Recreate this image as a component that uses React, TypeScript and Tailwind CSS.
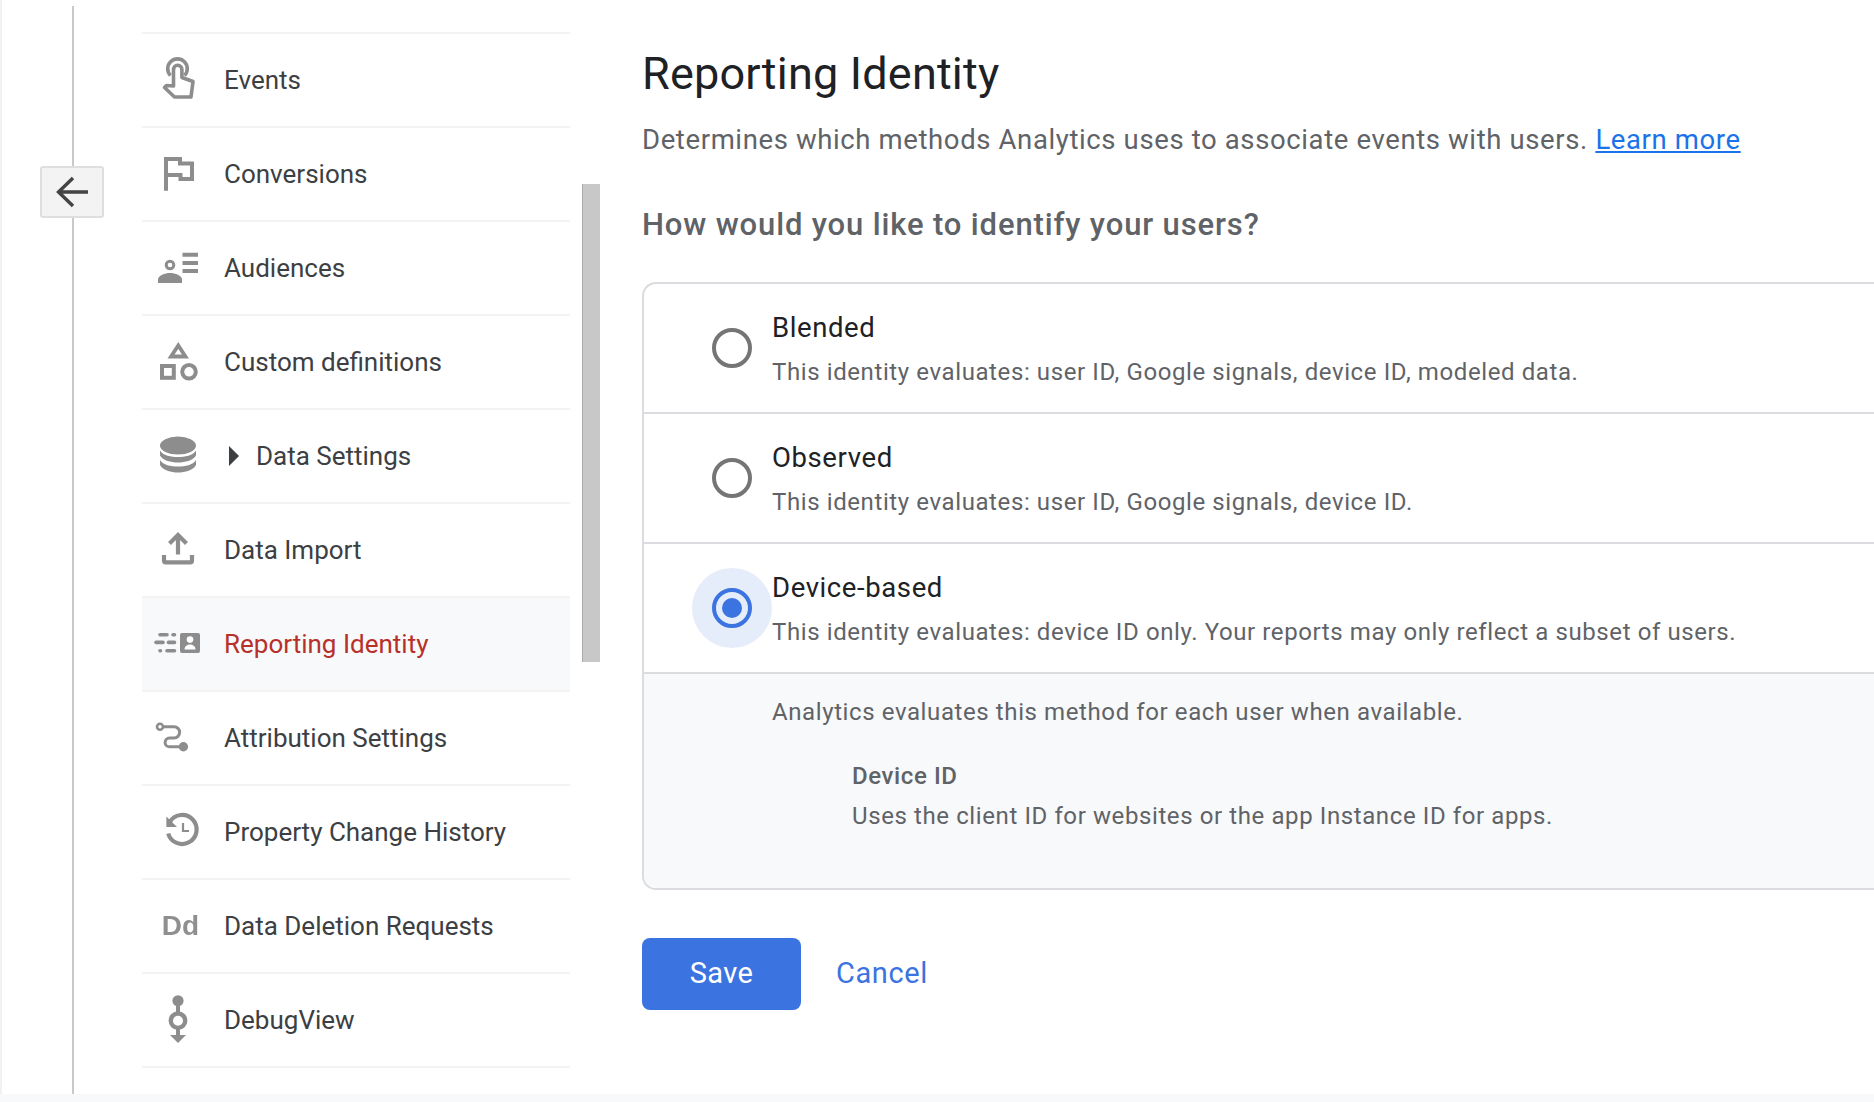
import type { ReactNode } from 'react';

const gray = '#8d8d8d';

function Icon({ children }: { children: ReactNode }) {
  return (
    <svg viewBox="0 0 56 56" className="w-[56px] h-[56px] shrink-0" fill="none" stroke={gray} strokeWidth={3.6}>
      {children}
    </svg>
  );
}

const EventsIcon = () => (
  <Icon>
    <path d="M20.5 23.5A9.8 9.8 0 1 1 34.5 23.5" />
    <path d="M23.5 34V17.5a4.2 4.2 0 0 1 8.4 0V25.5L43 29.5 41 45H24.5L14.5 35.5 16.5 33.5z" strokeLinejoin="round" />
  </Icon>
);

const FlagIcon = () => (
  <Icon>
    <path d="M16 44.7V13H30V17.5H42V33H30.5V29H16" strokeWidth={4} />
  </Icon>
);

const AudienceIcon = () => (
  <Icon>
    <circle cx="20" cy="25" r="3.8" strokeWidth={3} />
    <path d="M8 43V39.5C8 35.5 15 33 20 33S32 35.5 32 39.5V43Z" fill={gray} stroke="none" />
    <path d="M32.5 14.7H48M32.5 23H48M32.5 31H48" strokeWidth={4} />
  </Icon>
);

const ShapesIcon = () => (
  <Icon>
    <path d="M28.3 11.5L35.5 22.5H21Z" strokeWidth={3.8} />
    <rect x="12" y="32" width="11.8" height="11.8" strokeWidth={4} />
    <circle cx="39" cy="37.8" r="6.8" strokeWidth={4} />
  </Icon>
);

const DatabaseIcon = () => (
  <Icon>
    <ellipse cx="28" cy="17.6" rx="18" ry="9" fill={gray} stroke="none" />
    <path d="M10 22.5C13 27.5 21 29 28 29S43 27.5 46 22.5V27.5C43 32.5 35 34.5 28 34.5S13 32.5 10 27.5Z" fill={gray} stroke="none" />
    <path d="M10 32C13 37 21 38.5 28 38.5S43 37 46 32V37C43 42.5 35 44.5 28 44.5S13 42.5 10 37Z" fill={gray} stroke="none" />
  </Icon>
);

const ImportIcon = () => (
  <Icon>
    <path d="M28 13V32.5M19.5 21.5L28 13 36.5 21.5" strokeWidth={4.2} />
    <path d="M14 33V38.5a1.8 1.8 0 0 0 1.8 1.8H40.2a1.8 1.8 0 0 0 1.8-1.8V33" strokeWidth={4.2} />
  </Icon>
);

const IdentityIcon = () => (
  <Icon>
    <rect x="30" y="17" width="20" height="20" rx="2" fill={gray} stroke="none" />
    <circle cx="40" cy="23.6" r="3.3" fill="#fff" stroke="none" />
    <path d="M34.5 33.5C34.5 30 37.5 28.5 40 28.5S45.5 30 45.5 33.5Z" fill="#fff" stroke="none" />
    <path d="M10 18.7H17M23 18.7H24.5M6 26.4H13M18.5 26.4H24.5M10 34.7H10.5M17 34.7H24.5" strokeWidth={3.6} strokeLinecap="round" />
  </Icon>
);

const AttributionIcon = () => (
  <Icon>
    <circle cx="10" cy="16.7" r="3" strokeWidth={2.6} />
    <path d="M13 16.7H24a5.6 5.6 0 0 1 0 11.3H19.5a4.4 4.4 0 0 0 0 8.8H32" strokeWidth={3} />
    <circle cx="33.4" cy="36.7" r="4.7" fill={gray} stroke="none" />
  </Icon>
);

const HistoryIcon = () => (
  <Icon>
    <path d="M20 17.5A14.5 14.5 0 1 1 18.2 29.5" strokeWidth={4.2} />
    <path d="M16.4 12.5V23H27Z" fill={gray} stroke="none" />
    <path d="M33 19V27H39" strokeWidth={2.2} />
  </Icon>
);

const DebugIcon = () => (
  <Icon>
    <path d="M28 9V45" strokeWidth={4} />
    <circle cx="28" cy="8.8" r="5.6" fill={gray} stroke="none" />
    <circle cx="28" cy="28.7" r="7.2" fill="#fff" strokeWidth={4.4} />
    <path d="M20 43H36L28 51Z" fill={gray} stroke="none" />
  </Icon>
);

const navItems: { label: string; icon: ReactNode; caret?: boolean; active?: boolean }[] = [
  { label: 'Events', icon: <EventsIcon /> },
  { label: 'Conversions', icon: <FlagIcon /> },
  { label: 'Audiences', icon: <AudienceIcon /> },
  { label: 'Custom definitions', icon: <ShapesIcon /> },
  { label: 'Data Settings', icon: <DatabaseIcon />, caret: true },
  { label: 'Data Import', icon: <ImportIcon /> },
  { label: 'Reporting Identity', icon: <IdentityIcon />, active: true },
  { label: 'Attribution Settings', icon: <AttributionIcon /> },
  { label: 'Property Change History', icon: <HistoryIcon /> },
  {
    label: 'Data Deletion Requests',
    icon: (
      <span className="w-[56px] h-[56px] shrink-0 flex items-center justify-center pl-[5px] font-['Liberation_Sans',sans-serif] font-bold text-[28px] text-[#8f8f8f] blur-[0.4px]">
        Dd
      </span>
    ),
  },
  { label: 'DebugView', icon: <DebugIcon /> },
];

function NavRow({ label, icon, caret, active }: (typeof navItems)[number]) {
  return (
    <div className={`h-[94px] border-t-2 border-[#f3f3f3] flex items-center pl-[8px] ${active ? 'bg-[#f8f9fa]' : ''}`}>
      {icon}
      {caret && (
        <svg viewBox="0 0 10 20" className="w-[10px] h-[20px] ml-[23px] -mr-[7px]">
          <path d="M0 0L10 10 0 20Z" fill="#3c4043" />
        </svg>
      )}
      <span className={`ml-[18px] text-[26px] ${caret ? 'pl-[6px]' : ''} ${active ? 'text-[#b7302a]' : 'text-[#3c4043]'}`}>
        {label}
      </span>
    </div>
  );
}

function RadioRow({ title, desc, checked }: { title: string; desc: string; checked?: boolean }) {
  return (
    <div className="h-[130px] flex items-center border-b-2 border-[#dadce0]">
      <div className="ml-[48px] w-[80px] flex justify-center shrink-0">
        <div className={`w-[80px] h-[80px] rounded-full flex items-center justify-center ${checked ? 'bg-[#e5ecfa]' : ''}`}>
          <div className={`w-[40px] h-[40px] rounded-full border-[4px] flex items-center justify-center ${checked ? 'border-[#3b73e0]' : 'border-[#757575]'}`}>
            {checked && <div className="w-[20px] h-[20px] rounded-full bg-[#3b73e0]" />}
          </div>
        </div>
      </div>
      <div>
        <div className="mt-[3px] text-[27.5px] leading-[36px] tracking-[0.6px] text-[#202124]">{title}</div>
        <div className="mt-[9px] text-[24px] leading-[34px] tracking-[0.6px] text-[#5f6368]">{desc}</div>
      </div>
    </div>
  );
}

export default function App() {
  return (
    <div className="w-[1874px] h-[1102px] overflow-hidden bg-white font-['Roboto',sans-serif]">
      <div className="h-[1094px] flex">
        <div className="relative w-[142px] shrink-0 pt-[6px] pl-[70px] border-l-2 border-[#f1f1f1]">
          <div className="w-[2px] h-full bg-[#c9c9c9]" />
          <div className="absolute left-[38px] top-[166px] w-[64px] h-[52px] rounded-[3px] border-2 border-[#dedede] bg-[#f3f3f3] flex items-center justify-center">
            <svg viewBox="0 0 36 36" className="w-[36px] h-[36px]" fill="none" stroke="#444" strokeWidth={3.4}>
              <path d="M34 18H4M19 4L4.5 18 19 32" />
            </svg>
          </div>
        </div>
        <div className="w-[428px] shrink-0 pt-[32px]">
          {navItems.map(item => (
            <NavRow key={item.label} {...item} />
          ))}
          <div className="border-t-2 border-[#f3f3f3]" />
        </div>
        <div className="ml-[12px] mt-[184px] w-[18px] h-[478px] shrink-0 bg-[#c8c8c8] border-l border-[#acacac]" />
        <main className="ml-[42px] flex-1 min-w-0">
          <h1 className="mt-[46px] text-[45px] leading-[56px] tracking-[0.2px] text-[#202124]">Reporting Identity</h1>
          <p className="mt-[20px] text-[27.5px] leading-[36px] tracking-[0.62px] text-[#5f6368]">
            Determines which methods Analytics uses to associate events with users.{' '}
            <a className="text-[#1a73e8] underline">Learn more</a>
          </p>
          <h2 className="mt-[48px] text-[31px] leading-[38px] font-medium tracking-[0.86px] text-[#5f6368]">
            How would you like to identify your users?
          </h2>
          <div className="mt-[38px] h-[608px] rounded-l-[14px] border-2 border-r-0 border-[#dadce0] overflow-hidden">
            <RadioRow title="Blended" desc="This identity evaluates: user ID, Google signals, device ID, modeled data." />
            <RadioRow title="Observed" desc="This identity evaluates: user ID, Google signals, device ID." />
            <RadioRow checked title="Device-based" desc="This identity evaluates: device ID only. Your reports may only reflect a subset of users." />
            <div className="h-[218px] bg-[#f8f9fa] pl-[128px] pt-[21px] text-[24px] leading-[34px] tracking-[0.6px] text-[#5f6368]">
              <p>Analytics evaluates this method for each user when available.</p>
              <div className="pl-[80px] mt-[30px]">
                <p className="font-medium">Device ID</p>
                <p className="mt-[6px]">Uses the client ID for websites or the app Instance ID for apps.</p>
              </div>
            </div>
          </div>
          <div className="mt-[48px] flex items-center gap-[35px]">
            <button className="w-[159px] h-[72px] rounded-[8px] bg-[#3b73e0] text-white text-[29px] tracking-[0.4px]">Save</button>
            <button className="text-[#3b73e0] text-[29px] tracking-[0.6px]">Cancel</button>
          </div>
        </main>
      </div>
      <div className="h-[8px] bg-[#f8f9fa]" />
    </div>
  );
}
